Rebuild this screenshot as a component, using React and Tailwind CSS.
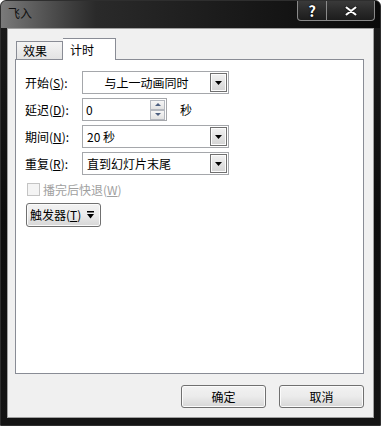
const font = { fontFamily: '"Noto Sans CJK SC", "Noto Sans", sans-serif' };

function Arrow() {
  return (
    <svg width="7" height="4" viewBox="0 0 7 4">
      <polygon points="0,0 7,0 3.5,4" fill="#000" />
    </svg>
  );
}

function DropButton() {
  return (
    <div className="w-[17px] h-[19px] mr-[1px] flex items-center justify-center border border-[#707070] bg-linear-to-b from-[#f2f2f2] to-[#d4d4d4] shadow-[inset_0_0_0_1px_#fcfcfc]">
      <Arrow />
    </div>
  );
}

function Label({ text, k }) {
  return (
    <span className="w-[57px] shrink-0 text-[12px] text-black leading-none">
      {text}(<span className="underline">{k}</span>):
    </span>
  );
}

function Combo({ children, center }) {
  return (
    <div className="w-[147px] h-[23px] flex items-center border border-[#a5a7ab] bg-white">
      <div
        className={
          center
            ? "flex-1 text-center text-[12px] leading-none"
            : "flex-1 pl-[4px] text-[12px] leading-none"
        }
      >
        {children}
      </div>
      <DropButton />
    </div>
  );
}

function SpinBtn({ up }) {
  return (
    <div className="w-[15px] h-[10px] flex items-center justify-center border border-[#b4b8bf] bg-linear-to-b from-[#f6f6f6] to-[#e2e2e2]">
      <svg width="6" height="3" viewBox="0 0 6 3">
        <polygon points={up ? "0,3 6,3 3,0" : "0,0 6,0 3,3"} fill="#4c5f80" />
      </svg>
    </div>
  );
}

function Button({ children, className }) {
  return (
    <div
      className={
        "h-[23px] flex items-center justify-center rounded-[3px] border border-[#707070] bg-linear-to-b from-[#f2f2f2] via-[#ebebeb] to-[#d6d6d6] shadow-[inset_0_0_0_1px_#fbfbfb] text-[12px] leading-none text-black " +
        (className || "")
      }
    >
      {children}
    </div>
  );
}

export default function App() {
  return (
    <div
      style={font}
      className="w-[381px] h-[426px] flex flex-col rounded-t-[6px] overflow-hidden border border-[#2e2e2e] bg-linear-to-b from-[#1c1c1c] via-[#0d0d0d] to-[#141414]"
    >
      <div className="h-[27px] shrink-0 flex items-start justify-between bg-linear-to-r from-[#7a7a7a] via-[#2a2a2a] via-25% to-[#0a0a0a]">
        <span className="pl-[7px] pt-[6px] text-[12px] leading-none text-[#111]">
          飞入
        </span>
        <div className="flex mr-[5px] h-[20px] rounded-b-[4px] border border-t-0 border-[#8a8a8a] bg-linear-to-b from-[#3a3a3a] to-[#1c1c1c]">
          <div className="w-[29px] flex items-center justify-center border-r border-[#8a8a8a] text-white font-bold text-[15px] leading-none [text-shadow:0_0_2px_#000,0_0_1px_#000]">
            ?
          </div>
          <div className="w-[47px] flex items-center justify-center">
            <svg width="14" height="10" viewBox="0 0 14 10">
              <path
                d="M2.5 1.5 L11.5 8.5 M11.5 1.5 L2.5 8.5"
                stroke="#222"
                strokeWidth="4"
                strokeLinecap="round"
              />
              <path
                d="M2.5 1.5 L11.5 8.5 M11.5 1.5 L2.5 8.5"
                stroke="#fff"
                strokeWidth="2"
                strokeLinecap="round"
              />
            </svg>
          </div>
        </div>
      </div>

      <div className="flex-1 mx-[6px] mb-[7px] flex flex-col border border-[#a0a0a0] bg-[#f0f0f0] pt-[9px] pl-[7px] pr-[9px] pb-[8px]">
        <div className="h-[21px] flex items-end pl-[1px]">
          <div className="w-[47px] h-[18px] flex items-center pl-[6px] border border-b-0 border-[#898c95] bg-linear-to-b from-[#f4f4f4] to-[#e3e3e3] text-[12px] leading-none">
            效果
          </div>
          <div className="relative z-10 -mb-px w-[53px] h-[22px] flex items-center pl-[7px] border border-b-0 border-l-0 border-[#898c95] bg-white text-[12px] leading-none">
            计时
          </div>
        </div>

        <div className="h-[315px] shrink-0 border border-[#898c95] bg-white pl-[9px] pt-[11px] flex flex-col">
          <div className="flex flex-col gap-[4px]">
            <div className="flex items-center">
              <Label text="开始" k="S" />
              <Combo center>与上一动画同时</Combo>
            </div>
            <div className="flex items-center">
              <Label text="延迟" k="D" />
              <div className="w-[85px] h-[23px] flex items-center border border-[#a5a7ab] bg-white">
                <span className="flex-1 pl-[3px] text-[12px] leading-none">0</span>
                <div className="flex flex-col mr-[1px]">
                  <SpinBtn up />
                  <SpinBtn />
                </div>
              </div>
              <span className="ml-[13px] text-[12px] leading-none">秒</span>
            </div>
            <div className="flex items-center">
              <Label text="期间" k="N" />
              <Combo>20 秒</Combo>
            </div>
            <div className="flex items-center">
              <Label text="重复" k="R" />
              <Combo>直到幻灯片末尾</Combo>
            </div>
          </div>

          <div className="mt-[8px] ml-[2px] h-[13px] flex items-center gap-[3px]">
            <div className="w-[13px] h-[13px] border border-[#c4c4c4] bg-[#f4f4f4]" />
            <span className="text-[12px] leading-none text-[#a0a0a0]">
              播完后快退(<span className="underline">W</span>)
            </span>
          </div>

          <div className="mt-[7px] ml-[1px]">
            <Button className="w-[75px] h-[24px] justify-start pl-[3px] gap-[6px]">
              <span>
                触发器(<span className="underline">T</span>)
              </span>
              <svg width="7" height="8" viewBox="0 0 7 8">
                <rect x="0" y="0" width="7" height="1.5" fill="#000" />
                <polygon points="0,3 7,3 3.5,7.5" fill="#000" />
              </svg>
            </Button>
          </div>
        </div>

        <div className="mt-[11px] flex justify-end gap-[13px]">
          <Button className="w-[85px]">确定</Button>
          <Button className="w-[85px]">取消</Button>
        </div>
      </div>
    </div>
  );
}
